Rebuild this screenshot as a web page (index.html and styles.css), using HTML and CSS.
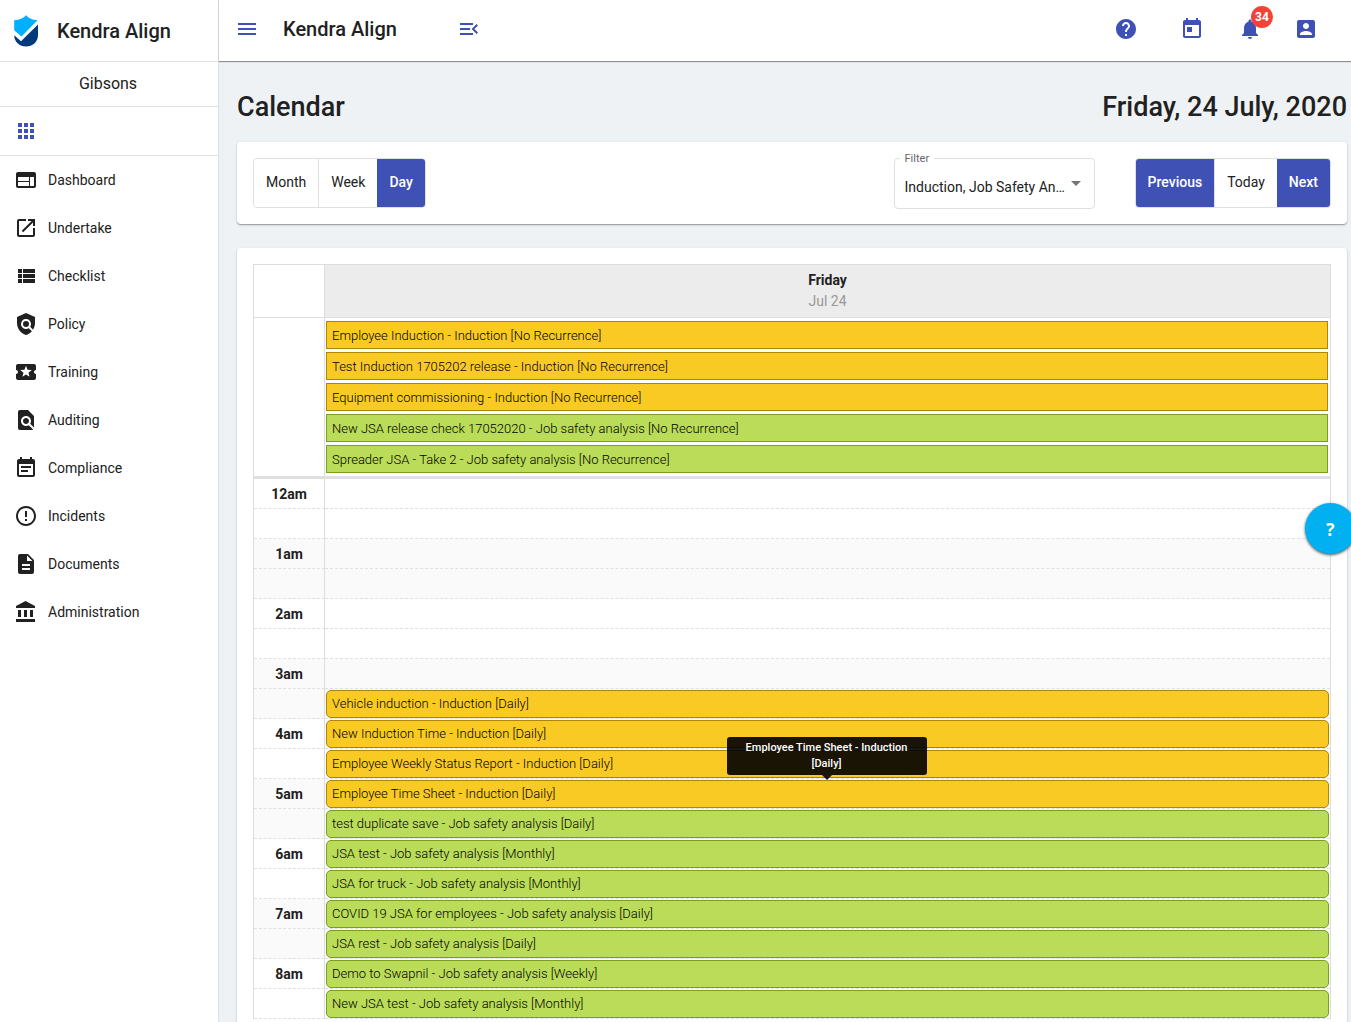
FILE: index.html
```html
<!DOCTYPE html>
<html lang="en">
<head>
<meta charset="utf-8">
<meta name="viewport" content="width=device-width, initial-scale=1">
<title>Kendra Align - Calendar</title>
<link rel="stylesheet" href="styles.css">
</head>
<body>
<div class="app">
  <aside class="sidebar">
    <div class="brand">
      <svg class="brand-logo" viewBox="0 0 24 32" aria-hidden="true"><path fill="#00b0ff" d="M12 0c1.500 2.600 6.500 5 11.500 5.300L7.500 21.500.200 15.200V5.300C5.500 5 10.500 2.600 12 0z"/><path fill="#003a7d" d="M24 9.500V20c0 7-5.500 11.500-12 11.500S.200 27 .200 20.300l6.800 6L24 9.500z"/></svg>
      <span class="brand-name">Kendra Align</span>
    </div>
    <div class="company">Gibsons</div>
    <div class="apps">
      <button class="icon-button" type="button" aria-label="Apps"><svg class="icon" viewBox="0 0 24 24"><path d="M4 8h4V4H4v4zm6 12h4v-4h-4v4zm-6 0h4v-4H4v4zm0-6h4v-4H4v4zm6 0h4v-4h-4v4zm6-10v4h4V4h-4zm-6 4h4V4h-4v4zm6 6h4v-4h-4v4zm0 6h4v-4h-4v4z"/></svg></button>
    </div>
    <nav class="menu">
      <a class="menu-item" href="#"><svg class="icon" viewBox="0 0 24 24"><path d="M20 4H4c-1.100 0-1.990.900-1.990 2L2 18c0 1.100.900 2 2 2h16c1.100 0 2-.900 2-2V6c0-1.100-.900-2-2-2zm-5 14H4v-4h11v4zm0-5H4V9h11v4zm5 5h-4V9h4v9z"/></svg>Dashboard</a>
      <a class="menu-item" href="#"><svg class="icon" viewBox="0 0 24 24"><path d="M19 19H5V5h7V3H5c-1.110 0-2 .900-2 2v14c0 1.100.890 2 2 2h14c1.100 0 2-.900 2-2v-7h-2v7zM14 3v2h3.590l-9.830 9.830 1.410 1.410L19 6.410V10h2V3h-7z"/></svg>Undertake</a>
      <a class="menu-item" href="#"><svg class="icon" viewBox="0 0 24 24"><path d="M4 14h4v-4H4v4zm0 5h4v-4H4v4zM4 9h4V5H4v4zm5 5h12v-4H9v4zm0 5h12v-4H9v4zM9 5v4h12V5H9z"/></svg>Checklist</a>
      <a class="menu-item" href="#"><svg class="icon" viewBox="0 0 24 24"><path d="M21 5l-9-4-9 4v6c0 5.550 3.840 10.740 9 12 2.300-.560 4.330-1.900 5.880-3.710l-3.120-3.120c-1.940 1.290-4.580 1.070-6.290-.640-1.950-1.950-1.950-5.120 0-7.070 1.950-1.950 5.120-1.950 7.070 0 1.710 1.710 1.920 4.350.640 6.290l2.900 2.900C20.290 15.690 21 13.380 21 11V5z"/><circle cx="12" cy="12" r="3"/></svg>Policy</a>
      <a class="menu-item" href="#"><svg class="icon" viewBox="0 0 24 24"><path d="M20 12c0-1.100.900-2 2-2V6c0-1.100-.900-2-2-2H4c-1.100 0-1.990.900-1.990 2v4c1.100 0 1.990.900 1.990 2s-.890 2-2 2v4c0 1.100.900 2 2 2h16c1.100 0 2-.900 2-2v-4c-1.100 0-2-.900-2-2zm-4.420 4.800L12 14.500l-3.580 2.300 1.080-4.120-3.290-2.690 4.240-.250L12 5.800l1.540 3.950 4.240.250-3.290 2.690 1.090 4.110z"/></svg>Training</a>
      <a class="menu-item" href="#"><svg class="icon" viewBox="0 0 24 24"><path d="M20 19.590V8l-6-6H6c-1.100 0-1.990.900-1.990 2L4 20c0 1.100.890 2 1.990 2H18c.450 0 .850-.150 1.190-.400l-4.430-4.430c-.800.520-1.740.830-2.760.830-2.760 0-5-2.240-5-5s2.240-5 5-5 5 2.240 5 5c0 1.020-.310 1.960-.830 2.750L20 19.590zM9 13c0 1.660 1.340 3 3 3s3-1.340 3-3-1.340-3-3-3-3 1.340-3 3z"/></svg>Auditing</a>
      <a class="menu-item" href="#"><svg class="icon" viewBox="0 0 24 24"><path d="M17 10H7v2h10v-2zm2-7h-1V1h-2v2H8V1H6v2H5c-1.110 0-1.990.900-1.990 2L3 19c0 1.100.890 2 2 2h14c1.100 0 2-.900 2-2V5c0-1.100-.900-2-2-2zm0 16H5V8h14v11zm-5-5H7v2h7v-2z"/></svg>Compliance</a>
      <a class="menu-item" href="#"><svg class="icon" viewBox="0 0 24 24"><path d="M11 15h2v2h-2zm0-8h2v6h-2zm.990-5C6.470 2 2 6.480 2 12s4.470 10 9.990 10C17.520 22 22 17.520 22 12S17.520 2 11.990 2zM12 20c-4.420 0-8-3.580-8-8s3.580-8 8-8 8 3.580 8 8-3.580 8-8 8z"/></svg>Incidents</a>
      <a class="menu-item" href="#"><svg class="icon" viewBox="0 0 24 24"><path d="M14 2H6c-1.100 0-1.990.900-1.990 2L4 20c0 1.100.890 2 1.990 2H18c1.100 0 2-.900 2-2V8l-6-6zm2 16H8v-2h8v2zm0-4H8v-2h8v2zm-3-5V3.500L18.500 9H13z"/></svg>Documents</a>
      <a class="menu-item" href="#"><svg class="icon" viewBox="0 0 24 24"><path d="M4 10v7h3v-7H4zm6 0v7h3v-7h-3zM2 22h19v-3H2v3zm14-12v7h3v-7h-3zm-4.500-9L2 6v2h19V6l-9.500-5z"/></svg>Administration</a>
    </nav>
  </aside>

  <div class="content">
    <header class="topbar">
      <button class="icon-button" type="button" aria-label="Menu"><svg class="icon" viewBox="0 0 24 24"><path d="M3 18h18v-2H3v2zm0-5h18v-2H3v2zm0-7v2h18V6H3z"/></svg></button>
      <span class="topbar-title">Kendra Align</span>
      <button class="icon-button" type="button" aria-label="Collapse menu"><svg class="icon" viewBox="0 0 24 24"><path d="M3 18h13v-2H3v2zm0-5h10v-2H3v2zm0-7v2h13V6H3zm18 9.590L17.420 12 21 8.410 19.590 7l-5 5 5 5L21 15.590z"/></svg></button>
      <div class="topbar-actions">
        <button class="icon-button" type="button" aria-label="Help"><svg class="icon" viewBox="0 0 24 24"><path d="M12 2C6.480 2 2 6.480 2 12s4.480 10 10 10 10-4.480 10-10S17.520 2 12 2zm1 17h-2v-2h2v2zm2.070-7.750l-.900.920C13.450 12.900 13 13.500 13 15h-2v-.500c0-1.100.450-2.100 1.170-2.830l1.240-1.260c.370-.360.590-.860.590-1.410 0-1.100-.900-2-2-2s-2 .900-2 2H8c0-2.210 1.790-4 4-4s4 1.790 4 4c0 .880-.360 1.680-.930 2.250z"/></svg></button>
        <button class="icon-button calendar-button" type="button" aria-label="Calendar"><svg class="icon" viewBox="0 0 24 24"><path d="M19 3h-1V1h-2v2H8V1H6v2H5c-1.110 0-1.990.900-1.990 2L3 19c0 1.100.890 2 2 2h14c1.100 0 2-.900 2-2V5c0-1.100-.900-2-2-2zm0 16H5V8h14v11zM7 10h5v5H7z"/></svg></button>
        <button class="icon-button" type="button" aria-label="Notifications"><svg class="icon" viewBox="0 0 24 24"><path d="M12 22c1.100 0 2-.900 2-2h-4c0 1.100.890 2 2 2zm6-6v-5c0-3.070-1.640-5.640-4.500-6.320V4c0-.830-.670-1.500-1.500-1.500s-1.500.670-1.500 1.500v.680C7.630 5.360 6 7.920 6 11v5l-2 2v1h16v-1l-2-2z"/></svg><span class="badge">34</span></button>
        <button class="icon-button" type="button" aria-label="Account"><svg class="icon" viewBox="0 0 24 24"><path d="M3 5v14c0 1.100.890 2 2 2h14c1.100 0 2-.900 2-2V5c0-1.100-.900-2-2-2H5c-1.110 0-2 .900-2 2zm12 4c0 1.660-1.340 3-3 3s-3-1.340-3-3 1.340-3 3-3 3 1.340 3 3zm-9 8c0-2 4-3.100 6-3.100s6 1.100 6 3.100v1H6v-1z"/></svg></button>
      </div>
    </header>

    <main class="page">
      <div class="page-head">
        <h1 class="heading">Calendar</h1>
        <h2 class="heading">Friday, 24 July, 2020</h2>
      </div>

      <section class="card toolbar">
        <div class="button-group">
          <button class="group-button" type="button">Month</button>
          <button class="group-button" type="button">Week</button>
          <button class="group-button active" type="button">Day</button>
        </div>
        <div class="filter">
          <label class="filter-label" for="filter">Filter</label>
          <select class="filter-select" id="filter"><option>Induction, Job Safety Analysis</option></select>
        </div>
        <div class="button-group">
          <button class="group-button active" type="button">Previous</button>
          <button class="group-button" type="button">Today</button>
          <button class="group-button active" type="button">Next</button>
        </div>
      </section>

      <section class="card">
        <table class="day-view">
          <thead>
            <tr>
              <td class="axis"></td>
              <th class="day-head" scope="col">Friday<span class="day-date">Jul 24</span></th>
            </tr>
          </thead>
          <tbody>
            <tr>
              <td class="axis all-day-axis"></td>
              <td class="all-day">
                <div class="event induction">Employee Induction - Induction [No Recurrence]</div>
                <div class="event induction">Test Induction 1705202 release - Induction [No Recurrence]</div>
                <div class="event induction">Equipment commissioning - Induction [No Recurrence]</div>
                <div class="event jsa">New JSA release check 17052020 - Job safety analysis [No Recurrence]</div>
                <div class="event jsa">Spreader JSA - Take 2 - Job safety analysis [No Recurrence]</div>
              </td>
            </tr>
          </tbody>
          <tbody class="hours">
            <tr><th class="axis" scope="row">12am</th><td></td></tr>
            <tr><th class="axis"></th><td></td></tr>
            <tr class="odd"><th class="axis" scope="row">1am</th><td></td></tr>
            <tr class="odd"><th class="axis"></th><td></td></tr>
            <tr><th class="axis" scope="row">2am</th><td></td></tr>
            <tr><th class="axis"></th><td></td></tr>
            <tr class="odd"><th class="axis" scope="row">3am</th><td></td></tr>
            <tr class="odd"><th class="axis"></th><td><div class="event induction">Vehicle induction - Induction [Daily]</div></td></tr>
            <tr><th class="axis" scope="row">4am</th><td><div class="event induction">New Induction Time - Induction [Daily]</div></td></tr>
            <tr><th class="axis"></th><td><div class="event induction">Employee Weekly Status Report - Induction [Daily]</div></td></tr>
            <tr class="odd"><th class="axis" scope="row">5am</th><td><div class="event induction">Employee Time Sheet - Induction [Daily]<div class="tooltip" role="tooltip">Employee Time Sheet - Induction [Daily]</div></div></td></tr>
            <tr class="odd"><th class="axis"></th><td><div class="event jsa">test duplicate save - Job safety analysis [Daily]</div></td></tr>
            <tr><th class="axis" scope="row">6am</th><td><div class="event jsa">JSA test - Job safety analysis [Monthly]</div></td></tr>
            <tr><th class="axis"></th><td><div class="event jsa">JSA for truck - Job safety analysis [Monthly]</div></td></tr>
            <tr class="odd"><th class="axis" scope="row">7am</th><td><div class="event jsa">COVID 19 JSA for employees - Job safety analysis [Daily]</div></td></tr>
            <tr class="odd"><th class="axis"></th><td><div class="event jsa">JSA rest - Job safety analysis [Daily]</div></td></tr>
            <tr><th class="axis" scope="row">8am</th><td><div class="event jsa">Demo to Swapnil - Job safety analysis [Weekly]</div></td></tr>
            <tr><th class="axis"></th><td><div class="event jsa">New JSA test - Job safety analysis [Monthly]</div></td></tr>
          </tbody>
        </table>
      </section>
    </main>
  </div>
</div>
<button class="help-bubble" type="button">?</button>
</body>
</html>
```

FILE: styles.css
```css
* {
  box-sizing: border-box;
}

body {
  margin: 0;
  background: #eef2f5;
  color: #212121;
  font: 400 14px/20px Roboto, sans-serif;
}

button,
select {
  font: inherit;
  color: inherit;
}

.app {
  display: flex;
  height: 100vh;
  overflow: hidden;
}

.icon {
  display: block;
  width: 24px;
  height: 24px;
  flex: none;
  fill: currentColor;
}

.icon-button {
  position: relative;
  padding: 0;
  border: 0;
  background: none;
  color: #3f51b5;
  cursor: pointer;
}

/* Sidebar */
.sidebar {
  flex: 0 0 219px;
  background: #fff;
  border-right: 1px solid #e0e0e0;
}

.brand {
  display: flex;
  align-items: center;
  gap: 19px;
  height: 62px;
  padding-left: 14px;
  border-bottom: 1px solid #e0e0e0;
}

.brand-logo {
  width: 24px;
  height: 32px;
}

.brand-name,
.topbar-title {
  font-size: 20px;
  font-weight: 500;
  line-height: 24px;
}

.company {
  height: 45px;
  padding-right: 2px;
  border-bottom: 1px solid #e0e0e0;
  font-size: 16px;
  line-height: 44px;
  text-align: center;
}

.apps {
  display: flex;
  align-items: center;
  height: 49px;
  padding-left: 14px;
  border-bottom: 1px solid #e0e0e0;
}

.menu-item {
  display: flex;
  align-items: center;
  gap: 10px;
  height: 48px;
  padding-left: 14px;
  color: inherit;
  text-decoration: none;
}

/* Top bar */
.content {
  flex: 1;
  min-width: 0;
  display: flex;
  flex-direction: column;
}

.topbar {
  position: relative;
  flex: none;
  display: flex;
  align-items: center;
  height: 61px;
  padding: 0 33px 3px 16px;
  background: #fff;
  box-shadow: 0 1px 1px #8e9196;
}

.topbar-title {
  margin: 0 60px 0 24px;
}

.topbar-actions {
  display: flex;
  gap: 32px;
  margin-left: auto;
}

.calendar-button {
  margin: 0 2px 0 10px;
}

.badge {
  position: absolute;
  top: -11px;
  right: -11px;
  width: 22px;
  height: 22px;
  border-radius: 50%;
  background: #f44336;
  color: #fff;
  font-size: 12px;
  font-weight: 700;
  line-height: 22px;
}

/* Page */
.page {
  flex: 1;
  padding: 28px 4px 0 18px;
  overflow-y: auto;
  scrollbar-width: none;
}

.page-head {
  display: flex;
  justify-content: space-between;
  margin-bottom: 17px;
}

.heading {
  margin: 0;
  font-size: 27px;
  font-weight: 500;
  line-height: 36px;
}

.card {
  margin-bottom: 24px;
  padding: 16px;
  border-radius: 4px;
  background: #fff;
  box-shadow: 0 1px 1px #9a9da1, 0 1px 3px #00000022;
}

.toolbar {
  display: flex;
  align-items: flex-start;
  height: 82px;
}

.button-group {
  display: flex;
  height: 50px;
  border: 1px solid #e0e0e0;
  border-radius: 4px;
  overflow: hidden;
}

.group-button {
  padding: 0 12px 2px;
  border: 0;
  background: #fff;
  cursor: pointer;
}

.group-button + .group-button:not(.active) {
  border-left: 1px solid #e0e0e0;
}

.group-button.active {
  background: #3f51b5;
  color: #fff;
  font-weight: 500;
}

.filter {
  position: relative;
  width: 201px;
  margin: 0 40px 0 auto;
}

.filter::after {
  content: "";
  position: absolute;
  top: 23px;
  right: 14px;
  border: 5px solid transparent;
  border-top-color: #757575;
  border-bottom: 0;
  pointer-events: none;
}

.filter-label {
  position: absolute;
  top: -6px;
  left: 6px;
  padding: 0 5px;
  background: #fff;
  color: #666;
  font-size: 11px;
  line-height: 14px;
}

.filter-select {
  display: block;
  width: 100%;
  height: 51px;
  padding: 7px 28px 0 10px;
  border: 1px solid #e0e0e0;
  border-radius: 4px;
  appearance: none;
  background: #fff;
  text-overflow: ellipsis;
}

/* Day view */
.day-view {
  width: 100%;
  table-layout: fixed;
  border: solid #ddd;
  border-width: 1px 1px 0;
  border-spacing: 0;
}

.day-view th,
.day-view td {
  padding: 0;
}

.day-view .axis {
  width: 71px;
  border-right: 1px solid #ddd;
}

.day-view thead th,
.day-view thead td {
  height: 53px;
  border-bottom: 1px solid #ddd;
}

.day-head {
  background: #ececec;
  font-weight: 700;
  line-height: 21px;
}

.day-date {
  display: block;
  color: #999;
  font-weight: 400;
}

.day-view .all-day,
.day-view .all-day-axis {
  border-bottom: 3px solid #e0e0e0;
}

.day-view .all-day {
  padding: 3px 2px 0 1px;
}

.all-day .event {
  margin-bottom: 3px;
  line-height: 28px;
}

.hours th,
.hours td {
  height: 30px;
  border-bottom: 1px dashed #e0e0e0;
}

.day-view .hours td {
  padding: 1px 1px 0;
}

.hours .odd {
  background: #fafafa;
}

.event {
  position: relative;
  height: 28px;
  padding-left: 5px;
  border: 1px solid;
  color: #000;
  font-size: 13px;
  font-weight: 300;
}

.hours .event {
  border-radius: 5px;
  line-height: 26px;
}

.event.induction {
  background: #f9ca24;
  border-color: #ad8604;
}

.event.jsa {
  background: #badc58;
  border-color: #7a9f1d;
}

.tooltip {
  position: absolute;
  bottom: 32px;
  left: 50%;
  z-index: 1;
  width: 200px;
  margin-left: -101px;
  padding: 3px 12px;
  border-radius: 3px;
  background: #000000e6;
  color: #fff;
  font-size: 11px;
  font-weight: 500;
  line-height: 16px;
  text-align: center;
}

.tooltip::after {
  content: "";
  position: absolute;
  top: 100%;
  left: 50%;
  margin-left: -5px;
  border: 5px solid transparent;
  border-top-color: #000000e6;
  border-bottom: 0;
}

.help-bubble {
  position: fixed;
  top: 503px;
  right: -5px;
  width: 51px;
  height: 51px;
  padding: 0;
  border: 0;
  border-radius: 50%;
  background: #00b0f0;
  box-shadow: 0 1px 3px #000000b0;
  color: #fff;
  font: 700 18px/50px "Open Sans", sans-serif;
  cursor: pointer;
}
```
